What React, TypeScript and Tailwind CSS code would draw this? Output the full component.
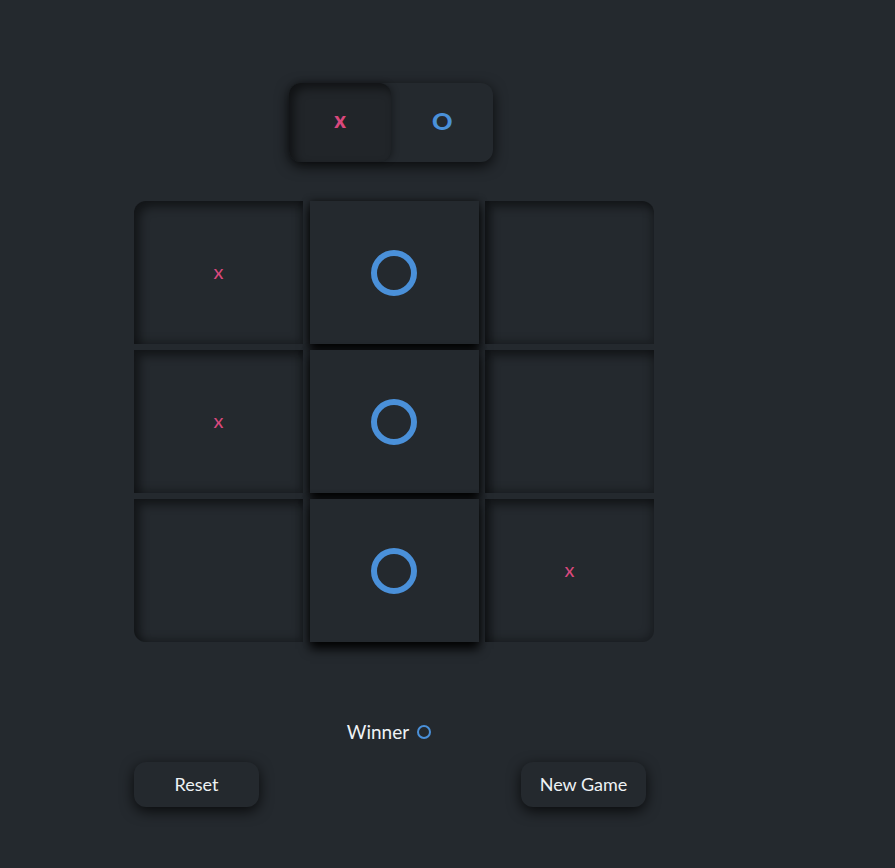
import { useState } from "react"

type Mark = "x" | "o" | ""

const initial: Mark[] = ["x", "o", "", "x", "o", "", "", "o", "x"]

const corner = (i: number) => {
  if (i === 0) return "rounded-tl-xl"
  if (i === 2) return "rounded-tr-xl"
  if (i === 6) return "rounded-bl-xl"
  if (i === 8) return "rounded-br-xl"
  return ""
}

const Ring = ({ w = 46, h = 46, stroke = 6 }: { w?: number; h?: number; stroke?: number }) => (
  <span
    className="block rounded-full border-[#4a90d9]"
    style={{ width: w, height: h, borderWidth: stroke }}
  />
)

const Cell = ({ mark, index }: { mark: Mark; index: number }) => {
  const raised = mark === "o"
  return (
    <div
      className={`flex h-[143px] items-center justify-center bg-[#24292e] ${corner(index)} ${
        raised
          ? "z-10 shadow-[0_7px_10px_rgba(0,0,0,0.9),0_0_7px_rgba(0,0,0,0.55)]"
          : "shadow-[inset_6px_6px_10px_rgba(0,0,0,0.45),inset_-3px_-3px_8px_rgba(0,0,0,0.25)]"
      }`}
    >
      {mark === "x" && (
        <span className="-mt-[3px] text-[20px] leading-none text-[#d9487c]">x</span>
      )}
      {mark === "o" && <Ring />}
    </div>
  )
}

export default function App() {
  const [player, setPlayer] = useState<"x" | "o">("x")
  const [board] = useState<Mark[]>(initial)

  return (
    <div
      className="min-h-[868px] w-full bg-[#24292e] text-white"
      style={{ fontFamily: "Lato, 'Open Sans', sans-serif" }}
    >
      <div className="ml-[134px] w-[520px] pt-[83px]">
        <div className="ml-[155px] flex h-[79px] w-[204px] rounded-xl bg-[#24292e] shadow-[0_4px_14px_rgba(0,0,0,0.75)]">
          <button
            onClick={() => setPlayer("x")}
            className={`flex flex-1 items-center justify-center rounded-xl text-[22px] font-black leading-none text-[#d9487c] ${
              player === "x"
                ? "bg-[#212529] shadow-[inset_5px_5px_10px_rgba(0,0,0,0.5),2px_0_6px_rgba(0,0,0,0.3)]"
                : ""
            }`}
          >
            <span className="-mt-[6px]">x</span>
          </button>
          <button
            onClick={() => setPlayer("o")}
            className={`flex flex-1 items-center justify-center rounded-xl text-[23px] font-black leading-none text-[#4a90d9] ${
              player === "o"
                ? "bg-[#212529] shadow-[inset_5px_5px_10px_rgba(0,0,0,0.5)]"
                : ""
            }`}
          >
            <span className="-mt-[2px] scale-x-110">O</span>
          </button>
        </div>

        <div className="mt-[39px] grid grid-cols-[169px_169px_169px] gap-x-[6.5px] gap-y-[6px]">
          {board.map((m, i) => (
            <Cell key={i} mark={m} index={i} />
          ))}
        </div>

        <div className="mt-[80px] flex items-center justify-center gap-2 pr-[10px] text-[19px] leading-none text-[#eef2f5]">
          <span>Winner</span>
          <Ring w={14} h={14} stroke={2} />
        </div>

        <div className="mt-[21px] flex justify-between pr-[8px]">
          <button className="h-[45px] w-[125px] rounded-xl bg-[#24292e] text-[18px] text-[#eef2f5] shadow-[0_4px_14px_rgba(0,0,0,0.75)]">
            Reset
          </button>
          <button className="h-[45px] w-[125px] rounded-xl bg-[#24292e] text-[18px] text-[#eef2f5] shadow-[0_4px_14px_rgba(0,0,0,0.75)]">
            New Game
          </button>
        </div>
      </div>
    </div>
  )
}
